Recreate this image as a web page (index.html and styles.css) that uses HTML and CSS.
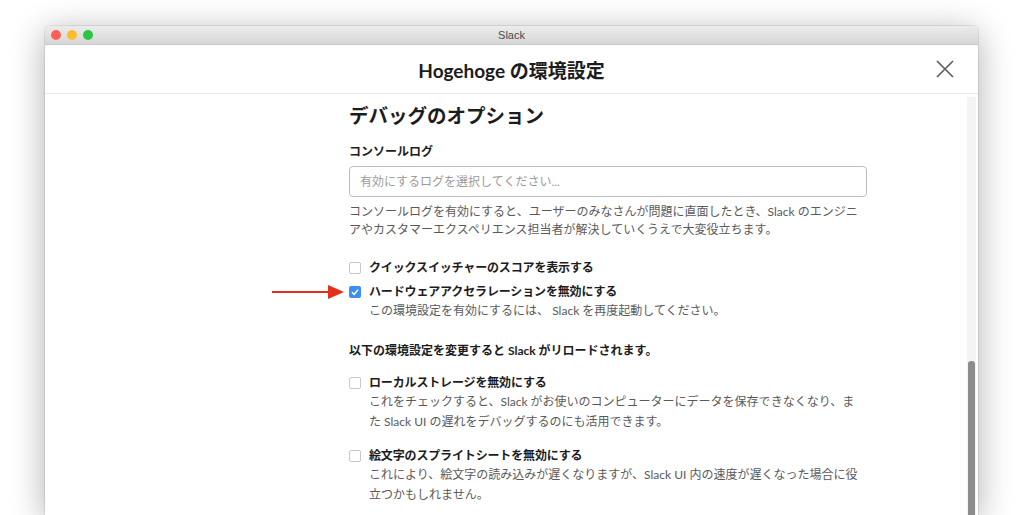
FILE: index.html
```html
<!DOCTYPE html>
<html lang="ja">
<head>
    <meta charset="UTF-8">
    <meta name="viewport" content="width=device-width, initial-scale=1.0">
    <title>Slack</title>
    <link rel="stylesheet" href="styles.css">
</head>
<body>
    <div class="window">
        <div class="titlebar">
            <div class="lights">
                <span class="light red"></span>
                <span class="light yellow"></span>
                <span class="light green"></span>
            </div>
            <div class="titlebar-text">Slack</div>
        </div>

        <div class="modal-header">
            <h1>Hogehoge の環境設定</h1>
            <button class="close" aria-label="閉じる">
                <svg width="18" height="18" viewBox="0 0 18 18">
                    <path d="M1 1 L17 17 M17 1 L1 17" stroke="#5e5e5e" stroke-width="1.7" fill="none"/>
                </svg>
            </button>
        </div>

        <div class="modal-body">
            <div class="nav"></div>
            <div class="content">
                <h2>デバッグのオプション</h2>

                <div class="field-label">コンソールログ</div>
                <div class="select">有効にするログを選択してください...</div>
                <p class="help">コンソールログを有効にすると、ユーザーのみなさんが問題に直面したとき、Slack のエンジニ<br>アやカスタマーエクスペリエンス担当者が解決していくうえで大変役立ちます。</p>

                <div class="option first">
                    <span class="box"></span>
                    <span class="option-label">クイックスイッチャーのスコアを表示する</span>
                </div>
                <div class="option">
                    <span class="arrow">
                        <svg width="72" height="14" viewBox="0 0 72 14">
                            <path d="M0 7 H58" stroke="#e2301c" stroke-width="2.2"/>
                            <path d="M56 0 L72 7 L56 14 Z" fill="#e2301c"/>
                        </svg>
                    </span>
                    <span class="box checked">
                        <svg width="12" height="12" viewBox="0 0 12 12">
                            <path d="M3 6.3 L5.1 8.4 L9 3.8" stroke="#fff" stroke-width="1.5" fill="none"/>
                        </svg>
                    </span>
                    <span class="option-label">ハードウェアアクセラレーションを無効にする</span>
                </div>
                <p class="option-help">この環境設定を有効にするには、 Slack を再度起動してください。</p>

                <div class="note">以下の環境設定を変更すると Slack がリロードされます。</div>

                <div class="option after-note">
                    <span class="box"></span>
                    <span class="option-label">ローカルストレージを無効にする</span>
                </div>
                <p class="option-help">これをチェックすると、Slack がお使いのコンピューターにデータを保存できなくなり、ま<br>た Slack UI の遅れをデバッグするのにも活用できます。</p>

                <div class="option spaced">
                    <span class="box"></span>
                    <span class="option-label">絵文字のスプライトシートを無効にする</span>
                </div>
                <p class="option-help">これにより、絵文字の読み込みが遅くなりますが、Slack UI 内の速度が遅くなった場合に役<br>立つかもしれません。</p>
            </div>
            <div class="scrollbar">
                <div class="thumb"></div>
            </div>
        </div>
    </div>
</body>
</html>
```

FILE: styles.css
```css
body {
    margin: 0;
    background: #ffffff;
    font-family: Lato, "Noto Sans CJK JP", sans-serif;
    color: #1d1c1d;
    overflow: hidden;
    height: 515px;
}
.window {
    margin: 26px 0 0 45px;
    width: 933px;
    height: 489px;
    background: #fff;
    border-radius: 5px 5px 0 0;
    box-shadow: 0 6px 34px rgba(0,0,0,0.32), 0 0 0 1px rgba(0,0,0,0.08);
    display: flex;
    flex-direction: column;
}
.titlebar {
    height: 18px;
    background: linear-gradient(#ececec, #d6d6d6);
    border-bottom: 1px solid #c8c8c8;
    border-radius: 5px 5px 0 0;
    display: flex;
    align-items: center;
    position: relative;
}
.lights {
    display: flex;
    gap: 6px;
    padding-left: 6px;
}
.light {
    width: 10px;
    height: 10px;
    border-radius: 50%;
}
.red { background: #fc5f57; }
.yellow { background: #fdbc2e; }
.green { background: #29c640; }
.titlebar-text {
    position: absolute;
    left: 0;
    right: 0;
    text-align: center;
    font-family: "Liberation Sans", sans-serif;
    font-size: 11px;
    color: #4a4a4a;
}
.modal-header {
    height: 48px;
    border-bottom: 1px solid #e9e9e9;
    display: flex;
    align-items: center;
    justify-content: center;
    position: relative;
}
.modal-header h1 {
    margin: 0;
    font-size: 19px;
    font-weight: 700;
    color: #1d1c1d;
}
.close {
    position: absolute;
    right: 24px;
    top: 15px;
    border: none;
    background: none;
    padding: 0;
    width: 18px;
    height: 18px;
}
.modal-body {
    flex: 1;
    display: flex;
    min-height: 0;
}
.nav {
    width: 304px;
    flex: none;
}
.content {
    width: 518px;
    padding-top: 9px;
}
h2 {
    margin: 0;
    font-size: 19.5px;
    line-height: 26px;
    font-weight: 700;
    color: #1d1c1d;
}
.field-label {
    margin-top: 14px;
    font-size: 12px;
    line-height: 18px;
    font-weight: 700;
}
.select {
    margin-top: 5px;
    height: 29px;
    border: 1px solid #bdbdbd;
    border-radius: 4px;
    padding: 0 10px;
    font-size: 12px;
    line-height: 29px;
    color: #9b9b9b;
}
.help {
    margin: 6px 0 0;
    font-size: 12px;
    line-height: 18px;
    color: #5a595a;
    white-space: nowrap;
}
.option {
    display: flex;
    align-items: center;
    gap: 8px;
    margin-top: 6px;
    font-size: 12px;
    line-height: 18px;
    position: relative;
}
.option.first { margin-top: 20px; }
.option.after-note { margin-top: 14px; }
.option.spaced { margin-top: 15px; }
.option-label {
    font-weight: 700;
    letter-spacing: -0.15px;
}
.box {
    width: 10px;
    height: 10px;
    border: 1px solid #c9c9c9;
    border-radius: 2px;
    background: #fff;
    flex: none;
    display: flex;
}
.box.checked {
    width: 12px;
    height: 12px;
    border: none;
    background: #3d8ff2;
}
.arrow {
    position: absolute;
    left: -77px;
    top: 2px;
    display: flex;
}
.option-help {
    margin: 0;
    padding-left: 20px;
    font-size: 12px;
    line-height: 20px;
    color: #5a595a;
    white-space: nowrap;
}
.note {
    margin-top: 21px;
    font-size: 12px;
    line-height: 18px;
    font-weight: 700;
}
.scrollbar {
    margin-left: auto;
    margin-right: 2px;
    margin-top: 3px;
    width: 9px;
    background: #f4f4f4;
    display: flex;
    flex-direction: column;
}
.thumb {
    margin: 264px 1px 0;
    flex: 1;
    background: #8c8c8c;
    border-radius: 3px 3px 0 0;
}
```
